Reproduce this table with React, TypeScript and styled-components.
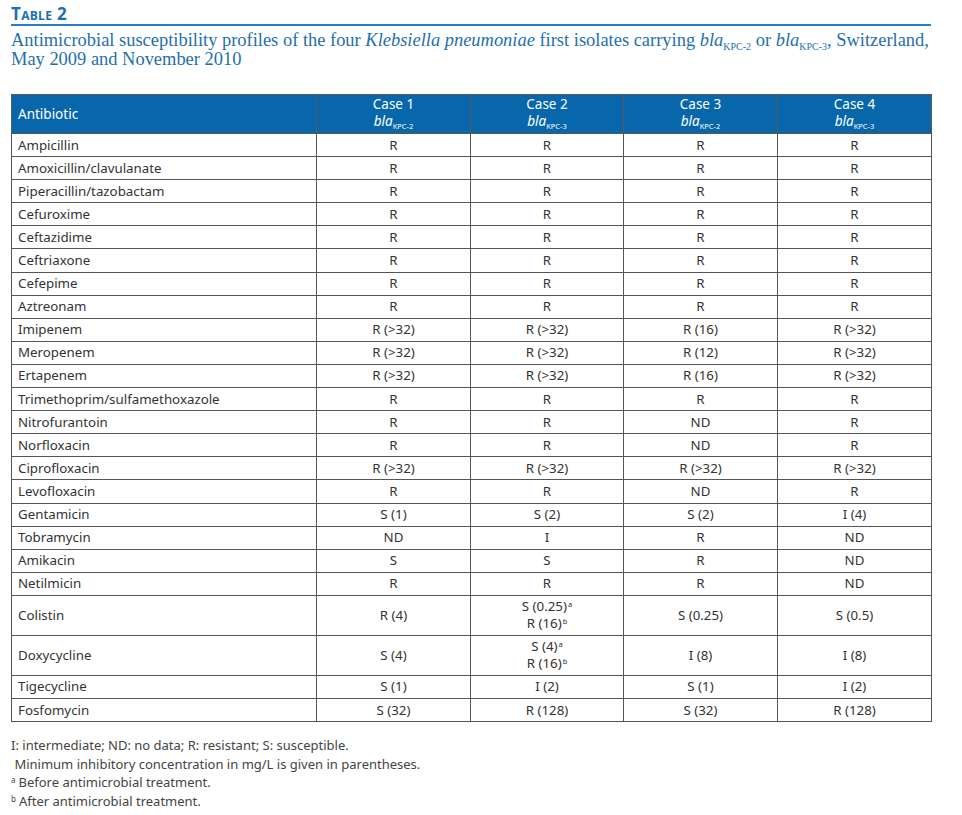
import React from "react";
import styled, { createGlobalStyle } from "styled-components";

const Global = createGlobalStyle`
  html, body { margin: 0; padding: 0; background: #fff; }
  body { font-family: "Noto Sans", "Open Sans", sans-serif; }
`;

const Page = styled.div`
  width: 920px;
  padding: 5px 0 0 11px;
`;

const Title = styled.div`
  font-family: "Open Sans", "Noto Sans", sans-serif;
  font-weight: 700;
  font-variant: small-caps;
  color: #1a6fb3;
  font-size: 17px;
  line-height: 18px;
  letter-spacing: 0.3px;
  padding-bottom: 1px;
  border-bottom: 2px solid #2b7cc0;
`;

const Caption = styled.div`
  font-family: "Liberation Serif", "DejaVu Serif", serif;
  color: #1f6fae;
  font-size: 18.45px;
  line-height: 18.5px;
  margin-top: 5px;
`;

const Sub = styled.span<{ $small?: boolean }>`
  font-size: ${(p) => (p.$small ? "7.5px" : "10px")};
  position: relative;
  top: ${(p) => (p.$small ? "3px" : "4px")};
  line-height: 0;
  font-style: normal;
`;

const Table = styled.table`
  margin-top: 26px;
  width: 921px;
  border-collapse: collapse;
  table-layout: fixed;
  font-family: "Noto Sans", "Open Sans", sans-serif;
  font-size: 13.3px;
  color: #333;
  border: 1px solid #777;
`;

const HeadRow = styled.tr`
  background: #0767aa;
  height: 39px;
`;

const Th = styled.th<{ $left?: boolean }>`
  color: #fff;
  font-weight: 400;
  font-size: 13.5px;
  line-height: 17px;
  text-align: ${(p) => (p.$left ? "left" : "center")};
  padding: ${(p) => (p.$left ? "0 0 0 6px" : "0 0 2px 0")};
  border: 1px solid #5a5a5a;
  border-bottom: 1px solid #555;
`;

const Tr = styled.tr<{ $tall?: boolean }>`
  height: ${(p) => (p.$tall ? "40px" : "23.1px")};
`;

const Td = styled.td<{ $left?: boolean }>`
  text-align: ${(p) => (p.$left ? "left" : "center")};
  padding: ${(p) => (p.$left ? "0 0 0 6px" : "0")};
  border: 1px solid #555;
  line-height: 17px;
  white-space: nowrap;
`;

const Sup = styled.span`
  font-size: 7.5px;
  position: relative;
  top: -4px;
  line-height: 0;
  margin-left: 1px;
`;

const Notes = styled.div`
  margin-top: 14px;
  font-family: "Noto Sans", "Open Sans", sans-serif;
  font-size: 13px;
  color: #444;
  line-height: 18.7px;
`;

const NoteSup = styled.span`
  font-size: 8px;
  position: relative;
  top: -4px;
  line-height: 0;
  margin-right: 3px;
`;

const Bla: React.FC<{ v: string; small?: boolean }> = ({ v, small }) => (
  <>
    <i>bla</i>
    <Sub $small={small}>KPC-{v}</Sub>
  </>
);

type Cell = string | React.ReactNode;
const rows: [string, Cell, Cell, Cell, Cell][] = [
  ["Ampicillin", "R", "R", "R", "R"],
  ["Amoxicillin/clavulanate", "R", "R", "R", "R"],
  ["Piperacillin/tazobactam", "R", "R", "R", "R"],
  ["Cefuroxime", "R", "R", "R", "R"],
  ["Ceftazidime", "R", "R", "R", "R"],
  ["Ceftriaxone", "R", "R", "R", "R"],
  ["Cefepime", "R", "R", "R", "R"],
  ["Aztreonam", "R", "R", "R", "R"],
  ["Imipenem", "R (>32)", "R (>32)", "R (16)", "R (>32)"],
  ["Meropenem", "R (>32)", "R (>32)", "R (12)", "R (>32)"],
  ["Ertapenem", "R (>32)", "R (>32)", "R (16)", "R (>32)"],
  ["Trimethoprim/sulfamethoxazole", "R", "R", "R", "R"],
  ["Nitrofurantoin", "R", "R", "ND", "R"],
  ["Norfloxacin", "R", "R", "ND", "R"],
  ["Ciprofloxacin", "R (>32)", "R (>32)", "R (>32)", "R (>32)"],
  ["Levofloxacin", "R", "R", "ND", "R"],
  ["Gentamicin", "S (1)", "S (2)", "S (2)", "I (4)"],
  ["Tobramycin", "ND", "I", "R", "ND"],
  ["Amikacin", "S", "S", "R", "ND"],
  ["Netilmicin", "R", "R", "R", "ND"],
  [
    "Colistin",
    "R (4)",
    <>
      S (0.25)<Sup>a</Sup>
      <br />
      R (16)<Sup>b</Sup>
    </>,
    "S (0.25)",
    "S (0.5)",
  ],
  [
    "Doxycycline",
    "S (4)",
    <>
      S (4)<Sup>a</Sup>
      <br />
      R (16)<Sup>b</Sup>
    </>,
    "I (8)",
    "I (8)",
  ],
  ["Tigecycline", "S (1)", "I (2)", "S (1)", "I (2)"],
  ["Fosfomycin", "S (32)", "R (128)", "S (32)", "R (128)"],
];

const cases: [string, string][] = [
  ["1", "2"],
  ["2", "3"],
  ["3", "2"],
  ["4", "3"],
];

export default function App() {
  return (
    <>
      <Global />
      <Page>
        <Title>Table 2</Title>
        <Caption>
          Antimicrobial susceptibility profiles of the four <i>Klebsiella pneumoniae</i> first
          isolates carrying <Bla v="2" /> or <Bla v="3" />, Switzerland,
          <br />
          May 2009 and November 2010
        </Caption>
        <Table>
          <colgroup>
            <col style={{ width: 305 }} />
            <col style={{ width: 154 }} />
            <col style={{ width: 153 }} />
            <col style={{ width: 154 }} />
            <col style={{ width: 154 }} />
          </colgroup>
          <thead>
            <HeadRow>
              <Th $left>Antibiotic</Th>
              {cases.map(([n, v]) => (
                <Th key={n}>
                  Case {n}
                  <br />
                  <Bla v={v} small />
                </Th>
              ))}
            </HeadRow>
          </thead>
          <tbody>
            {rows.map((r) => (
              <Tr key={r[0]} $tall={r[0] === "Colistin" || r[0] === "Doxycycline"}>
                <Td $left>{r[0]}</Td>
                {r.slice(1).map((c, i) => (
                  <Td key={i}>{c}</Td>
                ))}
              </Tr>
            ))}
          </tbody>
        </Table>
        <Notes>
          <div>I: intermediate; ND: no data; R: resistant; S: susceptible.</div>
          <div>&nbsp;Minimum inhibitory concentration in mg/L is given in parentheses.</div>
          <div>
            <NoteSup>a</NoteSup>Before antimicrobial treatment.
          </div>
          <div>
            <NoteSup>b</NoteSup>After antimicrobial treatment.
          </div>
        </Notes>
      </Page>
    </>
  );
}
